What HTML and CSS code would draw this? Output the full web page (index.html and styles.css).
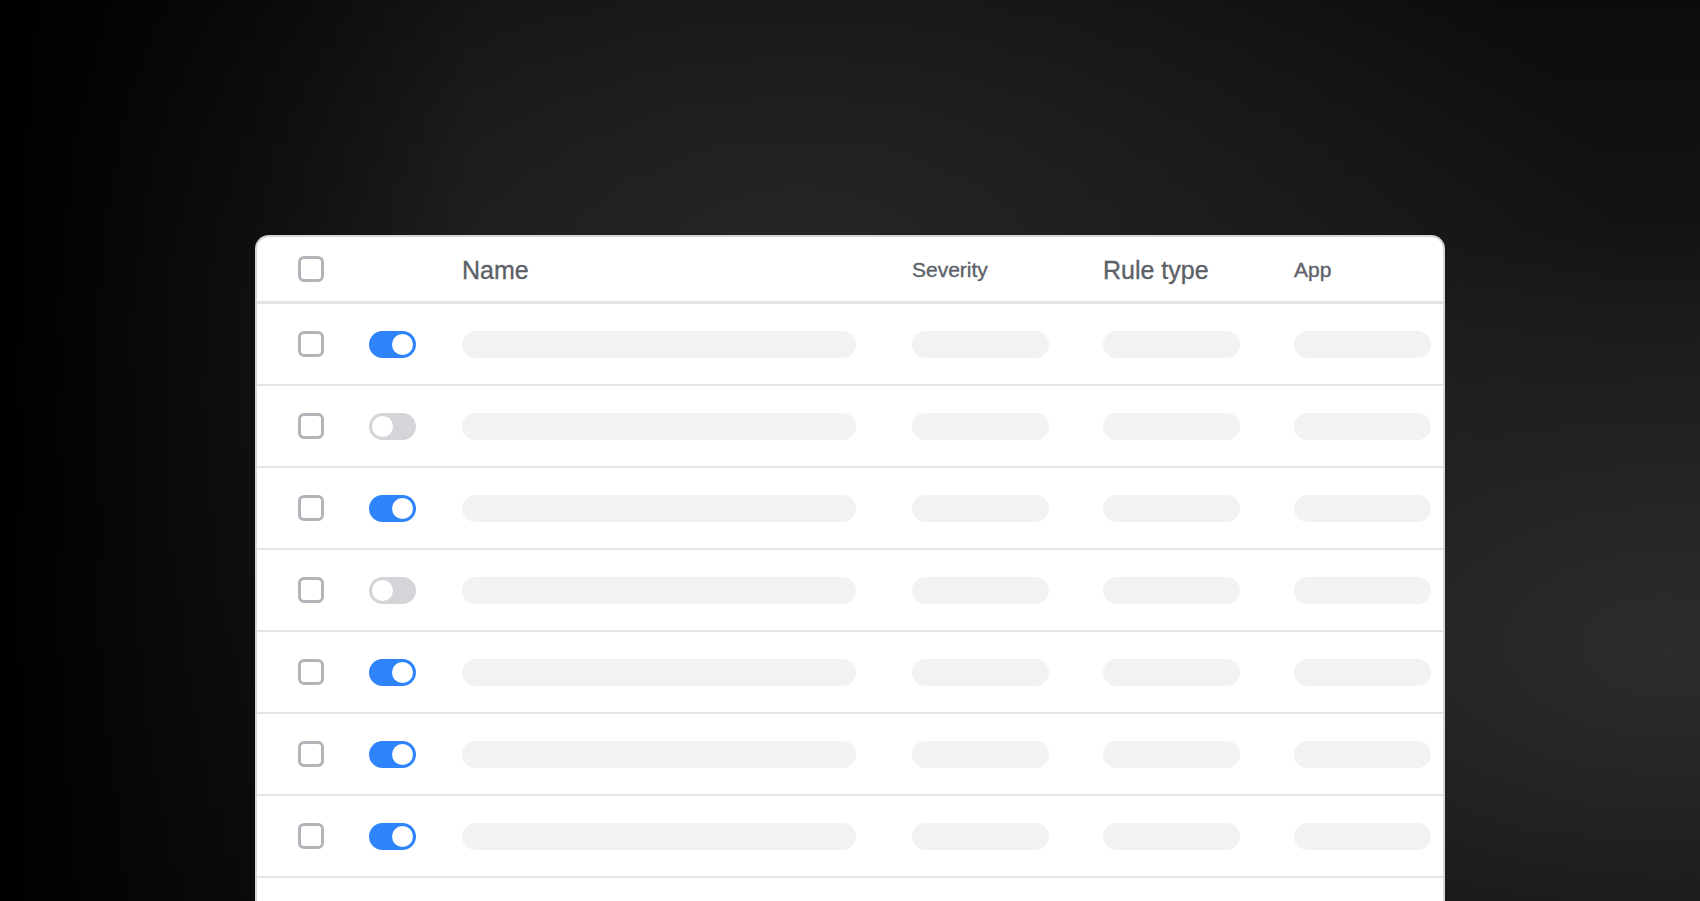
FILE: index.html
```html
<!DOCTYPE html>
<html>
<head>
<meta charset="utf-8">
<link rel="stylesheet" href="styles.css">
</head>
<body>
<div class="stage">
  <div class="card">
    <div class="row head">
      <span class="check"></span>
      <span></span>
      <span class="h h-lg">Name</span>
      <span class="h h-sm">Severity</span>
      <span class="h h-lg">Rule type</span>
      <span class="h h-sm">App</span>
    </div>
    <div class="row">
      <span class="check"></span><span class="toggle on"></span>
      <span class="pill wide"></span><span class="pill"></span><span class="pill"></span><span class="pill"></span>
    </div>
    <div class="row">
      <span class="check"></span><span class="toggle"></span>
      <span class="pill wide"></span><span class="pill"></span><span class="pill"></span><span class="pill"></span>
    </div>
    <div class="row">
      <span class="check"></span><span class="toggle on"></span>
      <span class="pill wide"></span><span class="pill"></span><span class="pill"></span><span class="pill"></span>
    </div>
    <div class="row">
      <span class="check"></span><span class="toggle"></span>
      <span class="pill wide"></span><span class="pill"></span><span class="pill"></span><span class="pill"></span>
    </div>
    <div class="row">
      <span class="check"></span><span class="toggle on"></span>
      <span class="pill wide"></span><span class="pill"></span><span class="pill"></span><span class="pill"></span>
    </div>
    <div class="row">
      <span class="check"></span><span class="toggle on"></span>
      <span class="pill wide"></span><span class="pill"></span><span class="pill"></span><span class="pill"></span>
    </div>
    <div class="row">
      <span class="check"></span><span class="toggle on"></span>
      <span class="pill wide"></span><span class="pill"></span><span class="pill"></span><span class="pill"></span>
    </div>
    <div class="row">
      <span class="check"></span><span class="toggle on"></span>
      <span class="pill wide"></span><span class="pill"></span><span class="pill"></span><span class="pill"></span>
    </div>
  </div>
</div>
</body>
</html>
```
FILE: styles.css
```css
html, body {
  margin: 0;
  padding: 0;
  height: 901px;
  overflow: hidden;
}
body {
  font-family: "Liberation Sans", Arial, sans-serif;
  background:
    linear-gradient(90deg, rgba(0,0,0,1) 0%, rgba(0,0,0,0.6) 10%, rgba(0,0,0,0) 28%),
    radial-gradient(ellipse 820px 520px at 47% 30%, rgba(38,38,38,1) 0%, rgba(38,38,38,0) 100%),
    radial-gradient(ellipse 700px 420px at 98% 72%, rgba(44,44,44,1) 0%, rgba(44,44,44,0) 100%),
    linear-gradient(180deg, #0c0c0c 0%, #161616 35%, #181818 70%, #121212 100%);
}
.stage {
  padding: 235px 0 0 255px;
}
.card {
  width: 1186px;
  background: #ffffff;
  border: 2px solid #d6d7d9;
  border-bottom: none;
  border-radius: 14px 14px 0 0;
  height: 700px;
}
.row {
  display: grid;
  grid-template-columns: 71px 93px 450px 191px 191px 137px;
  align-items: center;
  padding-left: 41px;
  height: 80px;
  border-bottom: 2px solid #e3e4e6;
}
.row.head {
  height: 64px;
  border-bottom: 3px solid #e2e3e6;
}
.check {
  display: block;
  width: 20px;
  height: 20px;
  border: 3px solid #b1b4b8;
  border-radius: 6px;
}
.toggle {
  display: block;
  position: relative;
  width: 47px;
  height: 27px;
  border-radius: 14px;
  background: #d3d5d8;
}
.toggle::after {
  content: "";
  position: absolute;
  top: 3px;
  left: 3px;
  width: 21px;
  height: 21px;
  border-radius: 50%;
  background: #ffffff;
}
.toggle.on {
  background: #2f84fb;
}
.toggle.on::after {
  left: 23px;
}
.pill {
  display: block;
  width: 137px;
  height: 27px;
  border-radius: 14px;
  background: #f1f2f4;
}
.pill.wide {
  width: 394px;
}
.h {
  color: #5c6168;
  line-height: 1;
  -webkit-text-stroke: 0.35px #5c6168;
}
.h-lg {
  font-size: 25px;
  margin-top: 2px;
}
.h-sm {
  font-size: 21px;
}
```
